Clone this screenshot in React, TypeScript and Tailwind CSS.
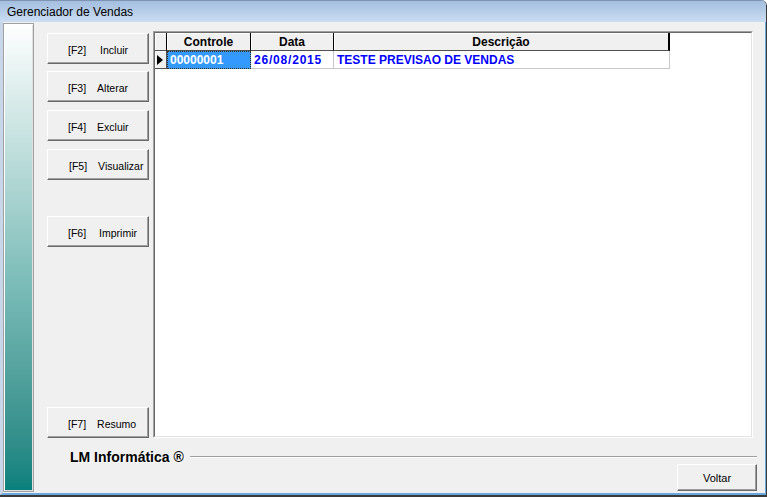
import React from "react";

type Btn = { k: string; label: string; keyPad: string; labelMl: string; top: string };

const buttons: Btn[] = [
  { k: "[F2]", label: "Incluir", keyPad: "pl-[20px]", labelMl: "ml-[14px]", top: "mt-[2px]" },
  { k: "[F3]", label: "Alterar", keyPad: "pl-[20px]", labelMl: "ml-[11px]", top: "mt-[7px]" },
  { k: "[F4]", label: "Excluir", keyPad: "pl-[20px]", labelMl: "ml-[11px]", top: "mt-[8px]" },
  { k: "[F5]", label: "Visualizar", keyPad: "pl-[21px]", labelMl: "ml-[11px]", top: "mt-[8px]" },
  { k: "[F6]", label: "Imprimir", keyPad: "pl-[20px]", labelMl: "ml-[13px]", top: "mt-[36px]" },
];

function ClassicButton({ b }: { b: Btn }) {
  return (
    <div
      className={`${b.top} w-[102px] h-[31px] flex items-center pt-[3px] ${b.keyPad} bg-[#f0f0f0] border border-t-white border-l-white border-r-[#696969] border-b-[#696969] shadow-[inset_-1px_-1px_0_#a0a0a0] text-[10.5px] text-black leading-none`}
    >
      <span>{b.k}</span>
      <span className={b.labelMl}>{b.label}</span>
    </div>
  );
}

export default function App() {
  return (
    <div className="w-[767px] h-[497px] flex flex-col bg-[#f0f0f0] font-['Liberation_Sans',Arial,sans-serif] overflow-hidden rounded-tr-[6px] border-r border-r-[#3a3a3a] border-b-2 border-b-[#3a3a3a]">
      {/* Title bar */}
      <div className="h-[22px] shrink-0 bg-gradient-to-b from-[#a3bee0] to-[#cbddf1] border-t border-t-[#7d93b0] flex items-start pl-[7px] pt-[5px]">
        <span className="text-[12px] leading-[13px] text-black">Gerenciador de Vendas</span>
      </div>

      {/* Body */}
      <div className="flex-1 flex border-l-[3px] border-l-[#c7d6e8] border-r border-r-[#6aa9de] border-b-2 border-b-[#6aa9de] min-h-0">
        {/* Left gradient strip */}
        <div className="w-[31px] my-[1px] border border-[#a0a0a0] shadow-[inset_1px_1px_0_#ffffff,inset_-1px_-1px_0_#e0e0e0] bg-gradient-to-b from-white via-[#7cbdb9] via-55% to-[#05807c]" />

        {/* Content */}
        <div className="flex-1 flex flex-col min-w-0">
          <div className="mt-[9px] h-[407px] flex">
            {/* Buttons column */}
            <div className="ml-[13px] w-[102px] flex flex-col">
              {buttons.map((b) => (
                <ClassicButton key={b.k} b={b} />
              ))}
              <div className="mt-auto w-[102px] h-[31px] flex items-center pt-[3px] pl-[20px] bg-[#f0f0f0] border border-t-white border-l-white border-r-[#696969] border-b-[#696969] shadow-[inset_-1px_-1px_0_#a0a0a0] text-[10.5px] text-black leading-none">
                <span>[F7]</span>
                <span className="ml-[11px]">Resumo</span>
              </div>
            </div>

            {/* Grid panel */}
            <div className="ml-[4px] w-[600px] h-[407px] border border-t-[#a0a0a0] border-l-[#a0a0a0] border-r-white border-b-white">
              <div className="w-full h-full border border-t-[#696969] border-l-[#696969] border-r-[#e3e3e3] border-b-[#e3e3e3] bg-white">
                {/* Header */}
                <div className="flex h-[18px] text-[12px] font-bold text-black leading-none">
                  <div className="w-[12px] bg-[#f0f0f0] border-r border-b border-r-black border-b-[#505050] shadow-[inset_1px_1px_0_#ffffff]" />
                  <div className="w-[84px] bg-[#f0f0f0] border-r border-b border-r-black border-b-[#505050] shadow-[inset_1px_1px_0_#ffffff] flex items-center justify-center">
                    Controle
                  </div>
                  <div className="w-[83px] bg-[#f0f0f0] border-r border-b border-r-black border-b-[#505050] shadow-[inset_1px_1px_0_#ffffff] flex items-center justify-center">
                    Data
                  </div>
                  <div className="w-[336px] bg-[#f0f0f0] border-r-2 border-b border-r-black border-b-[#505050] shadow-[inset_1px_1px_0_#ffffff] flex items-center justify-center">
                    Descrição
                  </div>
                </div>
                {/* Data row */}
                <div className="flex h-[18px] text-[12px] font-bold leading-none">
                  <div className="w-[12px] bg-[#f0f0f0] border-r border-b border-r-[#505050] border-b-[#505050] shadow-[inset_1px_1px_0_#ffffff] flex items-center pl-[2px]">
                    <div className="w-0 h-0 border-l-[6px] border-l-black border-y-[5px] border-y-transparent" />
                  </div>
                  <div className="w-[84px] bg-[#3399ff] border border-dotted border-[#3a2a10] flex items-center pl-[2px] text-white">
                    00000001
                  </div>
                  <div className="w-[83px] border-r border-b border-[#c8c8c8] flex items-center pl-[3px] text-[#0000ff] tracking-[0.8px]">
                    26/08/2015
                  </div>
                  <div className="w-[336px] border-r border-b border-[#c8c8c8] flex items-center pl-[3px] text-[#0000ff]">
                    TESTE PREVISAO DE VENDAS
                  </div>
                </div>
              </div>
            </div>
          </div>

          {/* Footer label + etched line */}
          <div className="mt-[11px] h-[15px] flex items-center pl-[36px] pr-[8px]">
            <span className="text-[14px] font-bold text-black leading-none [text-shadow:1px_1px_0_#ffffff]">
              LM Informática ®
            </span>
            <div className="flex-1 ml-[6px] h-[2px] border-t border-t-[#a0a0a0] border-b border-b-white" />
          </div>

          {/* Voltar */}
          <div className="flex justify-end pr-[8px]">
            <div className="w-[80px] h-[27px] flex items-center justify-center pt-[2px] bg-[#f0f0f0] border border-t-white border-l-white border-r-[#696969] border-b-[#696969] shadow-[inset_-1px_-1px_0_#a0a0a0] text-[11px] text-black leading-none">
              Voltar
            </div>
          </div>
        </div>
      </div>
    </div>
  );
}
